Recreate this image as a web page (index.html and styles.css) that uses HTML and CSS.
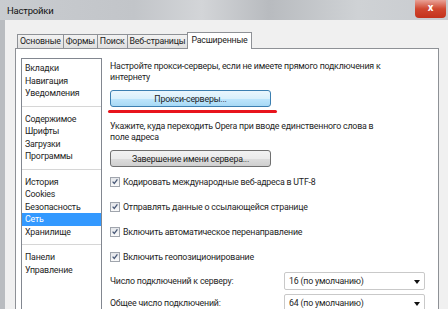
FILE: index.html
```html
<!DOCTYPE html>
<html lang="ru">
<head>
    <meta charset="UTF-8" />
    <title>Настройки</title>
    <link rel="stylesheet" href="styles.css">
</head>
<body>
    <div class="okno">
        <div class="zagolovok">
            <span class="nazvanie">Настройки</span>
            <div class="zakryt">x</div>
        </div>
        <div class="ramka">
            <div class="vkladki">
                <div class="vkladka">Основные</div>
                <div class="vkladka">Формы</div>
                <div class="vkladka">Поиск</div>
                <div class="vkladka">Веб-страницы</div>
                <div class="vkladka aktivnaya">Расширенные</div>
            </div>
            <div class="panel">
                <div class="spisok">
                    <div class="gruppa">
                        <div class="punkt">Вкладки</div>
                        <div class="punkt">Навигация</div>
                        <div class="punkt">Уведомления</div>
                    </div>
                    <div class="gruppa">
                        <div class="punkt">Содержимое</div>
                        <div class="punkt">Шрифты</div>
                        <div class="punkt">Загрузки</div>
                        <div class="punkt">Программы</div>
                    </div>
                    <div class="gruppa">
                        <div class="punkt">История</div>
                        <div class="punkt">Cookies</div>
                        <div class="punkt">Безопасность</div>
                        <div class="punkt vybran">Сеть</div>
                        <div class="punkt">Хранилище</div>
                    </div>
                    <div class="gruppa">
                        <div class="punkt">Панели</div>
                        <div class="punkt">Управление</div>
                    </div>
                </div>

                <div class="soderzhimoe">
                    <p class="tekst">Настройте прокси-серверы, если не имеете прямого подключения к интернету</p>
                    <button class="knopka sinyaya" type="button">Прокси-серверы...</button>
                    <div class="krasnaya"></div>

                    <p class="tekst vtoroy">Укажите, куда переходить Opera при вводе единственного слова в поле адреса</p>
                    <button class="knopka" type="button">Завершение имени сервера...</button>

                    <div class="flazhki">
                        <div class="flazhok"><span class="galka"><svg width="9" height="9" viewBox="0 0 9 9"><path d="M1.8 4.6 L3.7 6.6 L7.2 2.2" fill="none" stroke="#4a5a78" stroke-width="1.5"/></svg></span>Кодировать международные веб-адреса в UTF-8</div>
                        <div class="flazhok"><span class="galka"><svg width="9" height="9" viewBox="0 0 9 9"><path d="M1.8 4.6 L3.7 6.6 L7.2 2.2" fill="none" stroke="#4a5a78" stroke-width="1.5"/></svg></span>Отправлять данные о ссылающейся странице</div>
                        <div class="flazhok"><span class="galka"><svg width="9" height="9" viewBox="0 0 9 9"><path d="M1.8 4.6 L3.7 6.6 L7.2 2.2" fill="none" stroke="#4a5a78" stroke-width="1.5"/></svg></span>Включить автоматическое перенаправление</div>
                        <div class="flazhok"><span class="galka"><svg width="9" height="9" viewBox="0 0 9 9"><path d="M1.8 4.6 L3.7 6.6 L7.2 2.2" fill="none" stroke="#4a5a78" stroke-width="1.5"/></svg></span>Включить геопозиционирование</div>
                    </div>

                    <div class="stroka">
                        <span class="podpis">Число подключений к серверу:</span>
                        <div class="vybor">16 (по умолчанию)<span class="strelka"></span></div>
                    </div>
                    <div class="stroka">
                        <span class="podpis">Общее число подключений:</span>
                        <div class="vybor">64 (по умолчанию)<span class="strelka"></span></div>
                    </div>
                </div>
            </div>
        </div>
    </div>
</body>
</html>
```

FILE: styles.css
```css
*{
    box-sizing: border-box;
}
body{
    margin: 0;
    width: 448px;
    height: 309px;
    overflow: hidden;
    font-family: Roboto, 'Open Sans', sans-serif;
    font-size: 8.8px;
    letter-spacing: -0.2px;
    color: #1e1e1e;
    background: #ffffff;
}
.okno{
    height: 309px;
    display: flex;
    flex-direction: column;
}
.zagolovok{
    height: 20px;
    display: flex;
    align-items: flex-start;
    background: linear-gradient(90deg, #c9ccd0 0%, #c2c5c9 30%, #d3d5d8 45%, #b8bbbf 60%, #cfd2d5 80%, #c8cbcf 100%);
}
.nazvanie{
    padding-left: 7px;
    line-height: 22px;
    font-size: 9.5px;
    color: #111;
}
.zakryt{
    margin-left: auto;
    margin-right: 2px;
    width: 31px;
    height: 18px;
    background: linear-gradient(#e9a296, #d0472f 50%, #c4321c);
    border-radius: 0 0 4px 4px;
    color: #fff;
    font-weight: bold;
    font-size: 11px;
    text-align: center;
    line-height: 15px;
}
.ramka{
    flex: 1;
    display: flex;
    flex-direction: column;
    background: #f0f0f0;
    border-left: 5px solid #b9bcc0;
    padding: 12px 0 0 10px;
}
.vkladki{
    display: flex;
    align-items: flex-end;
    height: 16px;
    margin-left: 2px;
}
.vkladka{
    height: 14px;
    padding: 0 2px;
    line-height: 13px;
    border: 1px solid #8e9196;
    border-bottom: none;
    margin-right: -1px;
    background: linear-gradient(#f2f2f2, #e0e0e0);
    color: #222;
}
.aktivnaya{
    height: 17px;
    padding: 0 3px;
    background: #ffffff;
    position: relative;
    z-index: 1;
    margin-bottom: -1px;
    line-height: 14px;
}
.panel{
    flex: 1;
    width: 424px;
    background: #ffffff;
    border: 1px solid #8e9196;
    display: flex;
    padding: 9px 0 0 5px;
}
.spisok{
    width: 81px;
    height: 260px;
    border: 1px solid #828790;
    padding: 3px 0 0 0;
}
.gruppa{
    border-bottom: 1px solid #d6d6d6;
    padding-bottom: 6px;
    margin-bottom: 6px;
}
.gruppa:last-child{
    border-bottom: none;
}
.punkt{
    line-height: 12.5px;
    padding-left: 3px;
}
.vybran{
    background: #3399ff;
    color: #ffffff;
}
.soderzhimoe{
    padding: 3px 0 0 8px;
    width: 330px;
}
.tekst{
    margin: 0;
    line-height: 11px;
    width: 272px;
}
.knopka{
    display: block;
    margin-top: 7px;
    width: 161px;
    height: 17px;
    padding: 0;
    font-family: inherit;
    font-size: 8.8px;
    letter-spacing: -0.2px;
    color: #1e1e1e;
    border: 1px solid #707070;
    border-radius: 3px;
    background: linear-gradient(#f2f2f2 0%, #ebebeb 50%, #dddddd 51%, #cfcfcf 100%);
}
.sinyaya{
    border-color: #3c7fb1;
    background: linear-gradient(#eaf6fd 0%, #d9f0fc 50%, #bee6fd 51%, #a7d9f5 100%);
}
.krasnaya{
    width: 169px;
    height: 3px;
    margin: 3px 0 0 -2px;
    background: #e8141c;
    border-radius: 2px;
}
.vtoroy{
    margin-top: 8px;
}
.flazhki{
    margin-top: 2px;
}
.flazhok{
    display: flex;
    align-items: center;
    height: 25px;
}
.galka{
    width: 10px;
    height: 10px;
    border: 1px solid #a0a5ad;
    background: linear-gradient(#e4e6ea, #fafafa);
    margin-right: 3px;
    display: flex;
    align-items: center;
    justify-content: center;
}
.stroka{
    display: flex;
    align-items: center;
    height: 20px;
    margin-top: 2px;
}
.podpis{
    width: 174px;
}
.vybor{
    position: relative;
    width: 141px;
    height: 18px;
    border: 1px solid #c9c9c9;
    border-radius: 2px;
    padding-left: 4px;
    line-height: 16px;
    background: #ffffff;
}
.strelka{
    position: absolute;
    right: 4px;
    top: 7px;
    border-left: 3px solid transparent;
    border-right: 3px solid transparent;
    border-top: 4px solid #111;
}
```
